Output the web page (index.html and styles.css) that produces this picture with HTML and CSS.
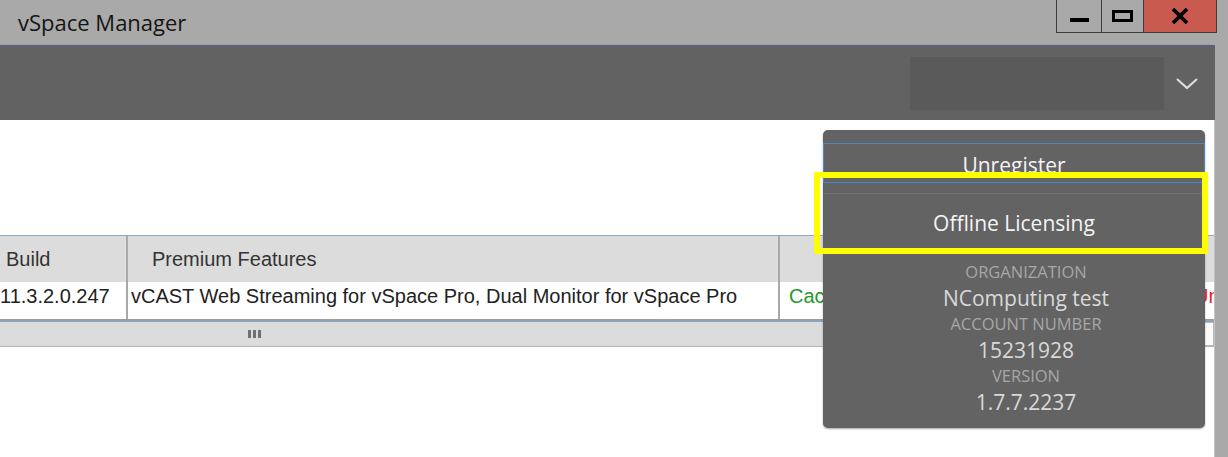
FILE: index.html
```html
<!DOCTYPE html>
<html lang="en">
<head>
    <meta charset="UTF-8">
    <title>vSpace Manager</title>
    <link rel="stylesheet" href="styles.css">
</head>
<body>

<div id="window">
    <div class="titlebar">
        <span class="title">vSpace Manager</span>
        <div class="controls">
            <div class="ctl min"><span class="bar"></span></div>
            <div class="ctl max"><span class="box"></span></div>
            <div class="ctl close">
                <svg width="18" height="16" viewBox="0 0 18 16">
                    <path d="M2 1 L16 15 M16 1 L2 15" stroke="#000" stroke-width="3.6" fill="none"/>
                </svg>
            </div>
        </div>
    </div>

    <div class="frame">
        <div class="toolbar">
            <div class="selector"></div>
            <svg class="chevron" width="24" height="14" viewBox="0 0 24 14">
                <polyline points="2,2 12,11 22,2" stroke="#dcdcdc" stroke-width="2.2" fill="none"/>
            </svg>
        </div>

        <div class="content">
            <div class="grid">
                <div class="grid-head">
                    <div class="cell c1">Build</div>
                    <div class="cell c2">Premium Features</div>
                    <div class="cell c3"></div>
                </div>
                <div class="grid-row">
                    <div class="cell c1">11.3.2.0.247</div>
                    <div class="cell c2">vCAST Web Streaming for vSpace Pro, Dual Monitor for vSpace Pro</div>
                    <div class="cell c3"><span class="ok">Cached</span><span class="bad">Unlicensed</span></div>
                </div>
                <div class="hscroll">
                    <span class="grip"><i></i><i></i><i></i></span>
                    <span class="end"></span>
                </div>
            </div>
        </div>
    </div>

    <div class="popup">
        <div class="btn unreg">Unregister</div>
        <div class="btn offline">Offline Licensing</div>
        <div class="info">
            <div class="label">ORGANIZATION</div>
            <div class="value">NComputing test</div>
            <div class="label">ACCOUNT NUMBER</div>
            <div class="value">15231928</div>
            <div class="label">VERSION</div>
            <div class="value">1.7.7.2237</div>
        </div>
    </div>

    <div class="highlight"></div>
</div>

</body>
</html>
```

FILE: styles.css
```css
*{margin: 0; padding: 0; box-sizing: border-box;}
html,body{
    height: 100%;
    overflow: hidden;
}
body{
    background: #a9a9a9;
}
#window{
    position: relative;
    height: 100%;
    background: #a9a9a9;
    display: flex;
    flex-direction: column;
}

/* title bar */
.titlebar{
    height: 44px;
    display: flex;
    justify-content: space-between;
    align-items: flex-start;
    padding-right: 11px;
}
.title{
    font-family: "Segoe UI", "Open Sans", sans-serif;
    font-size: 22px;
    line-height: 44px;
    color: #151515;
    padding-left: 18px;
}
.controls{
    display: flex;
    height: 33px;
    border-left: 1px solid #3c3c3c;
    border-bottom: 1px solid #3c3c3c;
}
.ctl{
    display: flex;
    justify-content: center;
    align-items: flex-start;
    height: 32px;
}
.ctl.min{
    width: 45px;
    border-right: 1px solid #3c3c3c;
}
.ctl.min .bar{
    display: block;
    width: 19px;
    height: 4px;
    margin-top: 18px;
    background: #000;
}
.ctl.max{
    width: 42px;
    border-right: 1px solid #3c3c3c;
}
.ctl.max .box{
    display: block;
    width: 21px;
    height: 12px;
    margin-top: 10px;
    border: 3px solid #000;
}
.ctl.close{
    width: 73px;
    background: #c85a4f;
    border-right: 1px solid #3c3c3c;
    padding-top: 8px;
}

/* main area */
.frame{
    flex: 1;
    margin-right: 13px;
    display: flex;
    flex-direction: column;
}
.toolbar{
    height: 76px;
    background: #626262;
    border-top: 1px solid #87a3c6;
    display: flex;
    align-items: center;
    justify-content: flex-end;
    padding-right: 16px;
}
.selector{
    width: 254px;
    height: 53px;
    background: #5a5a5a;
    margin-right: 11px;
    margin-top: 2px;
}
.chevron{
    margin-top: 2px;
}
.content{
    flex: 1;
    background: #fff;
    padding-top: 115px;
    border-right: 1px solid #c4c4c4;
}

/* table */
.grid{
    font-family: "Liberation Sans", Arial, sans-serif;
    font-size: 20px;
    color: #222;
    border-top: 1px solid #8fa9c9;
}
.grid-head, .grid-row{
    display: flex;
}
.grid-head{
    height: 46px;
    line-height: 46px;
    background: #dcdcdc;
    color: #333;
}
.grid-row{
    height: 38px;
    line-height: 29px;
    border-bottom: 1px solid #9c9c9c;
}
.cell{
    white-space: nowrap;
    overflow: hidden;
}
.c1{
    width: 128px;
    border-right: 2px solid #a9a9a9;
}
.c2{
    width: 652px;
    border-right: 2px solid #a9a9a9;
}
.c3{
    flex: 1;
}
.grid-head .c1{padding-left: 6px;}
.grid-head .c2{padding-left: 24px;}
.grid-row .c2{padding-left: 3px;}
.grid-row .c3{padding-left: 9px;}
.ok{
    color: #26982a;
}
.bad{
    color: #ee2222;
    margin-left: 336px;
}
.hscroll{
    height: 27px;
    background: #dcdcdc;
    border-top: 2px solid #8ea2b8;
    border-bottom: 1px solid #b4b4b4;
    display: flex;
    align-items: center;
    justify-content: space-between;
    padding-left: 248px;
}
.grip{
    display: flex;
    gap: 2px;
}
.grip i{
    display: block;
    width: 3px;
    height: 8px;
    background: #707070;
}
.end{
    width: 10px;
    height: 24px;
    background: #fafafa;
    border: 1px solid #b8b8b8;
}

/* licence popup */
.popup{
    position: absolute;
    left: 823px;
    top: 130px;
    width: 382px;
    height: 298px;
    background: #636363;
    border-radius: 5px;
    box-shadow: 0 1px 2px rgba(0,0,0,0.35);
    padding-top: 13px;
    font-family: "Segoe UI", "Open Sans", sans-serif;
    text-align: center;
}
.btn{
    font-size: 21px;
    color: #f4f4f4;
}
.unreg{
    height: 40px;
    border: 1px solid #4a88c4;
    padding-top: 4px;
    line-height: 34px;
    overflow: hidden;
}
.offline{
    margin-top: 10px;
    border-top: 1px solid #6f6f6f;
    line-height: 59px;
}
.info{
    margin-top: 7px;
    padding-left: 24px;
}
.label{
    font-size: 16.5px;
    line-height: 24px;
    color: #a7a7a7;
}
.value{
    font-size: 21px;
    line-height: 28px;
    color: #d9d9d9;
}

.highlight{
    position: absolute;
    left: 814px;
    top: 172px;
    width: 394px;
    height: 82px;
    border: 6px solid #ffff00;
}
```
